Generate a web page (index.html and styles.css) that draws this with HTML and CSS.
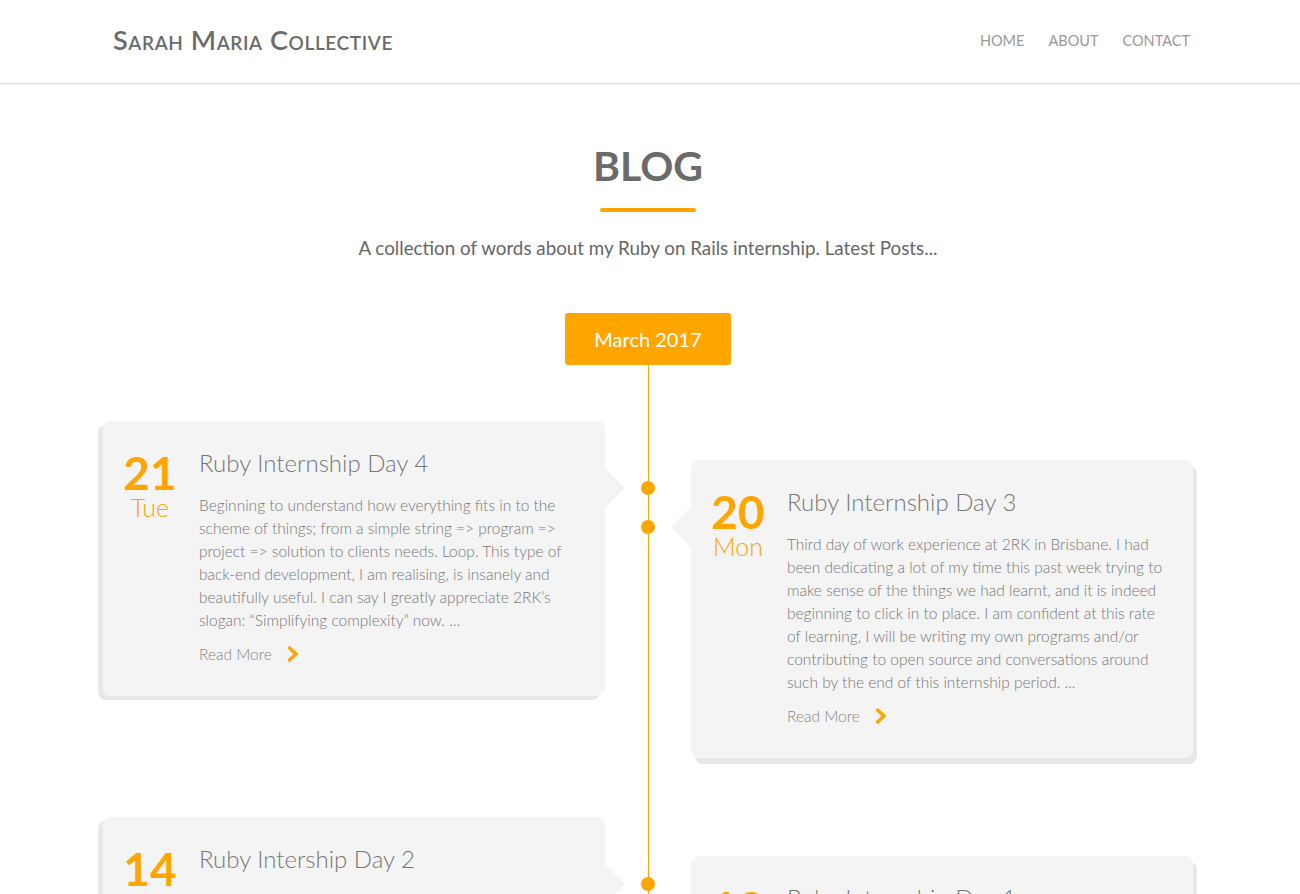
FILE: index.html
```html
<!DOCTYPE html>
<html lang="en">
<head>
<meta charset="utf-8">
<title>Blog | Sarah Maria Collective</title>
<link rel="stylesheet" href="styles.css">
</head>
<body>
<header class="site-header">
  <div class="header-inner">
    <a class="brand" href="#">Sarah Maria Collective</a>
    <nav class="nav">
      <a href="#">Home</a>
      <a href="#">About</a>
      <a href="#">Contact</a>
    </nav>
  </div>
</header>

<main class="main">
  <section class="intro">
    <h1 class="page-title">Blog</h1>
    <div class="title-rule"></div>
    <p class="lead">A collection of words about my Ruby on Rails internship. Latest Posts...</p>
  </section>

  <section class="timeline">
    <div class="month"><span class="month-badge">March 2017</span></div>

    <div class="timeline-rows">
      <article class="post post-left">
        <div class="post-date"><span class="day">21</span><span class="weekday">Tue</span></div>
        <div class="post-body">
          <h2 class="post-title">Ruby Internship Day 4</h2>
          <p class="post-excerpt">Beginning to understand how everything fits in to the scheme of things; from a simple string =&gt; program =&gt; project =&gt; solution to clients needs. Loop. This type of back-end development, I am realising, is insanely and beautifully useful. I can say I greatly appreciate 2RK’s slogan: “Simplifying complexity” now. ...</p>
          <a class="read-more" href="#">Read More <svg class="chev" width="13" height="18" viewBox="0 0 13 18"><path d="M2.5 2 L10 9 L2.5 16" fill="none" stroke="#ffa500" stroke-width="3.5"/></svg></a>
        </div>
      </article>

      <article class="post post-right">
        <div class="post-date"><span class="day">20</span><span class="weekday">Mon</span></div>
        <div class="post-body">
          <h2 class="post-title">Ruby Internship Day 3</h2>
          <p class="post-excerpt">Third day of work experience at 2RK in Brisbane. I had been dedicating a lot of my time this past week trying to make sense of the things we had learnt, and it is indeed beginning to click in to place. I am confident at this rate of learning, I will be writing my own programs and/or contributing to open source and conversations around such by the end of this internship period. ...</p>
          <a class="read-more" href="#">Read More <svg class="chev" width="13" height="18" viewBox="0 0 13 18"><path d="M2.5 2 L10 9 L2.5 16" fill="none" stroke="#ffa500" stroke-width="3.5"/></svg></a>
        </div>
      </article>

      <article class="post post-left">
        <div class="post-date"><span class="day">14</span><span class="weekday">Tue</span></div>
        <div class="post-body">
          <h2 class="post-title">Ruby Intership Day 2</h2>
          <p class="post-excerpt">Second day at 2RK. Today was all about getting my development environment set up properly and working through the basics of Ruby: strings, arrays, hashes and blocks. Slowly but surely it is all starting to make sense. ...</p>
          <a class="read-more" href="#">Read More <svg class="chev" width="13" height="18" viewBox="0 0 13 18"><path d="M2.5 2 L10 9 L2.5 16" fill="none" stroke="#ffa500" stroke-width="3.5"/></svg></a>
        </div>
      </article>

      <article class="post post-right">
        <div class="post-date"><span class="day">13</span><span class="weekday">Mon</span></div>
        <div class="post-body">
          <h2 class="post-title">Ruby Internship Day 1</h2>
          <p class="post-excerpt">First day of my Ruby on Rails internship at 2RK in Brisbane. Met the team, had a look around the office and was introduced to the projects I will be helping with over the coming weeks. ...</p>
          <a class="read-more" href="#">Read More <svg class="chev" width="13" height="18" viewBox="0 0 13 18"><path d="M2.5 2 L10 9 L2.5 16" fill="none" stroke="#ffa500" stroke-width="3.5"/></svg></a>
        </div>
      </article>
    </div>
  </section>
</main>
</body>
</html>
```

FILE: styles.css
```css
* { box-sizing: border-box; }

html, body {
  margin: 0;
  padding: 0;
  background: #fff;
}

body {
  font-family: Lato, "Open Sans", "Liberation Sans", sans-serif;
  color: #666;
}

a { text-decoration: none; }

/* Header */
.site-header {
  height: 84px;
  border-bottom: 1px solid #dcdcdc;
  box-shadow: 0 1px 2px rgba(0, 0, 0, 0.04);
  background: #fff;
}

.header-inner {
  width: 1080px;
  height: 83px;
  margin: 0 auto;
  display: flex;
  align-items: center;
  justify-content: space-between;
}

.brand {
  font-size: 27px;
  font-weight: 600;
  font-variant: small-caps;
  letter-spacing: 0.6px;
  color: #6b6b6b;
  margin-left: 3px;
  margin-top: -4px;
}

.nav {
  display: flex;
  gap: 24px;
  margin-top: -3px;
}

.nav a {
  font-size: 14.5px;
  font-weight: 400;
  text-transform: uppercase;
  color: #999;
}

/* Main */
.main {
  width: 1094px;
  padding-right: 4px;
  margin: 0 auto;
}

.intro {
  text-align: center;
  padding-top: 57px;
}

.page-title {
  margin: 0;
  font-size: 41px;
  line-height: 50px;
  font-weight: 700;
  text-transform: uppercase;
  color: #6b6b6b;
}

.title-rule {
  width: 96px;
  height: 4px;
  margin: 17px auto 0;
  background: #ffa500;
  border-radius: 2px;
}

.lead {
  margin: 23px 0 0;
  font-size: 18.8px;
  line-height: 26px;
  color: #666;
}

/* Timeline */
.timeline {
  margin-top: 52px;
  background: linear-gradient(#ffa500, #ffa500) 545px 0 / 1px 100% no-repeat;
  padding-bottom: 80px;
}

.month {
  display: flex;
  justify-content: center;
}

.month-badge {
  display: block;
  width: 166px;
  height: 52px;
  line-height: 52px;
  text-align: center;
  background: #ffa500;
  color: #fff;
  font-size: 20px;
  border-radius: 3px;
}

.timeline-rows {
  margin-top: 56px;
  display: grid;
  grid-template-columns: 502px 1fr 502px;
  row-gap: 59px;
  align-items: start;
}

.post {
  position: relative;
  display: flex;
  gap: 21px;
  padding: 27px 28px 31px 19px;
  background: #f4f4f4;
  border-radius: 8px;
}

.post-left {
  grid-column: 1;
  box-shadow: -5px 4px 0 #e8e8e8;
}

.post-right {
  grid-column: 3;
  margin-top: 39px;
  box-shadow: 4px 6px 0 #e8e8e8;
}

/* arrow */
.post::before {
  content: "";
  position: absolute;
  top: 47px;
  border-top: 20px solid transparent;
  border-bottom: 20px solid transparent;
}

.post-left::before {
  right: -20px;
  border-left: 20px solid #f4f4f4;
}

.post-right::before {
  left: -20px;
  border-right: 20px solid #f4f4f4;
}

/* dot on the line */
.post::after {
  content: "";
  position: absolute;
  top: 60px;
  width: 14px;
  height: 14px;
  border-radius: 50%;
  background: #ffa500;
}

.post-left::after { right: -50px; }
.post-right::after { left: -50px; }

.post-date {
  flex: none;
  width: 56px;
  text-align: center;
  padding-top: 3px;
  color: #ffa500;
}

.day {
  display: block;
  font-size: 46px;
  line-height: 44px;
  font-weight: 700;
}

.weekday {
  display: block;
  font-size: 25px;
  line-height: 24px;
  font-weight: 300;
}

.post-body {
  flex: 1;
  min-width: 0;
}

.post-title {
  margin: 0 0 16px;
  font-size: 24px;
  line-height: 30px;
  font-weight: 300;
  color: #777;
}

.post-excerpt {
  margin: 0 0 10px;
  font-size: 15.5px;
  line-height: 23px;
  font-weight: 300;
  color: #777;
}

.read-more {
  display: flex;
  align-items: center;
  gap: 14px;
  height: 23px;
  font-size: 15.5px;
  font-weight: 300;
  color: #888;
}

.chev { display: block; }
```
